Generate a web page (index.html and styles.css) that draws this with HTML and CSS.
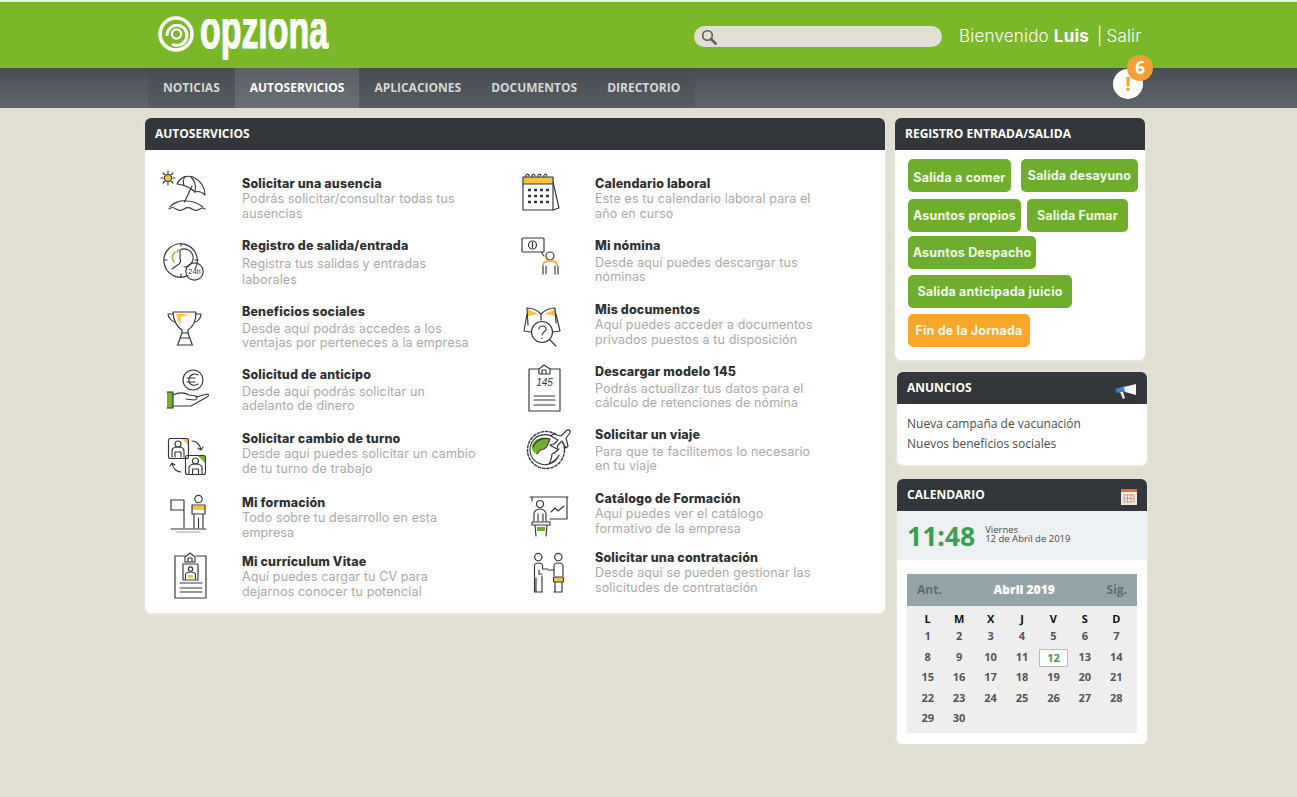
FILE: index.html
```html
<!DOCTYPE html>
<html lang="es">
<head>
    <meta charset="UTF-8">
    <title>Opziona</title>
    <link rel="stylesheet" href="styles.css">
</head>
<body>
    <header class="topbar">
        <div class="wrap topbar-inner">
            <svg class="logo" width="176" height="50" viewBox="0 0 176 50">
                <clipPath id="logo-clip"><rect x="40" y="9" width="136" height="41"/></clipPath>
                <circle class="logo-ring" cx="19" cy="24" r="16" stroke-width="3.6"/>
                <path class="logo-ring" d="M10 26a10 10 0 1 1 5 8" stroke-width="3"/>
                <circle class="logo-ring" cx="19.500" cy="24" r="4.600" stroke-width="2.400"/>
                <text class="logo-text" x="43" y="38" textLength="128" lengthAdjust="spacingAndGlyphs" clip-path="url(#logo-clip)">opziona</text>
            </svg>
            <div class="search">
                <svg width="16" height="16" viewBox="0 0 16 16">
                    <circle cx="6.5" cy="6.5" r="4.8" fill="none" stroke="#5c5c5c" stroke-width="1.6"/>
                    <path d="M10 10l4.6 4.6" stroke="#5c5c5c" stroke-width="2.6" stroke-linecap="round"/>
                </svg>
            </div>
            <div class="user">Bienvenido <b>Luis</b> <span class="sep">|</span>Salir</div>
        </div>
    </header>

    <nav class="navbar">
        <div class="wrap navbar-inner">
            <ul class="tabs">
                <li>NOTICIAS</li>
                <li class="active">AUTOSERVICIOS</li>
                <li>APLICACIONES</li>
                <li>DOCUMENTOS</li>
                <li>DIRECTORIO</li>
            </ul>
            <div class="alert">
                <span class="alert-mark">!</span>
                <span class="alert-count">6</span>
            </div>
        </div>
    </nav>

    <div class="wrap content">
        <main class="panel main-panel">
            <h2 class="panel-head">AUTOSERVICIOS</h2>
            <div class="services">
                <div class="service-col left">
                    <div class="service">
                        <svg class="ico" viewBox="0 0 56 56">
                            <circle class="fy" cx="13" cy="12" r="3.6"/>
                            <circle cx="13" cy="12" r="3.6"/>
                            <path d="M13 5v2M13 17v2M6 12h2M18 12h2M8 7l1.500 1.500M16.500 15.500L18 17M8 17l1.500-1.500M16.500 8.500L18 7"/>
                            <path d="M22 18c3-7 10-9 16-7 6 3 12 9 12 18-3-3-7-4-10-3-4-4-10-7-18-8z"/>
                            <path d="M30 10.500c-2 3-2 6-1 9M40 26c1-5 0-11-4-15"/>
                            <path d="M37 20l-7.500 16"/>
                            <path d="M15 41c3-4 10-7 17-6 6 0 12 3 16 6"/>
                            <path d="M14 43c3-2 4-2 7 0s5 2 8 0 5-2 8 0 5 2 8 0 3-1 5 0"/>
                        </svg>
                        <div class="service-text">
                            <h3>Solicitar una ausencia</h3>
                            <p>Podrás solicitar/consultar todas tus<br>ausencias</p>
                        </div>
                    </div>
                    <div class="service loose wide">
                        <svg class="ico" viewBox="0 0 56 56">
                            <path d="M40 41a16.700 16.700 0 1 0-7 6.500"/>
                            <path d="M26 15v3M26 46v3M9 32h3M40 32h3"/>
                            <path class="stroke-g" d="M20 24c-3 3-3 7-1 10M23 22l-1 2"/>
                            <path d="M25 22v9a4 4 0 0 1-1 5l-7 5M25 22a9 9 0 1 1 4 17"/>
                            <circle cx="39.500" cy="43.500" r="8.700"/>
                            <text class="ico-text" x="39.500" y="46" text-anchor="middle">24h</text>
                        </svg>
                        <div class="service-text">
                            <h3>Registro de salida/entrada</h3>
                            <p>Registra tus salidas y entradas<br>laborales</p>
                        </div>
                    </div>
                    <div class="service loose">
                        <svg class="ico" viewBox="0 0 56 56">
                            <path class="fy" d="M21 20h13l-8 3-1 9z"/>
                            <path d="M18 18h23c0 8-3 15-8 18v3h-6v-3c-5-3-9-10-9-18z"/>
                            <path d="M18 20h-5c0 3 3 7 7 8M41 20h5c0 3-2 7-6 8"/>
                            <path d="M27 39l-4 11M33 39l4 11M22 51h16M25 44h10"/>
                        </svg>
                        <div class="service-text">
                            <h3>Beneficios sociales</h3>
                            <p>Desde aquí podrás accedes a los<br>ventajas por perteneces a la empresa</p>
                        </div>
                    </div>
                    <div class="service loose">
                        <svg class="ico" viewBox="0 0 56 56">
                            <circle cx="38" cy="23" r="10"/>
                            <path d="M43 18c-3-2-8-1-9 4-1 5 4 8 9 5M32 21h8M32 25h8"/>
                            <rect class="fg" x="12" y="35" width="6" height="16"/>
                            <path d="M12 35h6v16h-6M18 38c6-3 11-3 16 0l7 1c2 1 1 4-2 4l-8-1M41 40l11-3c2 0 2 2 0 3L36 49H18"/>
                        </svg>
                        <div class="service-text">
                            <h3>Solicitud de anticipo</h3>
                            <p>Desde aquí podrás solicitar un<br>adelanto de dinero</p>
                        </div>
                    </div>
                    <div class="service">
                        <svg class="ico" viewBox="0 0 56 56">
                            <path class="fy" d="M26 17h7v7z"/>
                            <path class="fg" d="M43 35h7v7z"/>
                            <rect x="13.500" y="17.500" width="20" height="20" rx="2"/>
                            <rect x="30.500" y="34.500" width="20" height="19" rx="2"/>
                            <circle cx="23" cy="23" r="3"/>
                            <path d="M17 36v-6c0-3 2-4 6-4s6 1 6 4v6M20 36v-5h6v5"/>
                            <circle cx="40.500" cy="40" r="3"/>
                            <path d="M34 53v-6c0-3 3-4 6.500-4s6.500 1 6.500 4v6M37.500 53v-5h6v5"/>
                            <path d="M37 20c4 0 8 3 9 9M46 29l2-3M46 29l-3-2"/>
                            <path d="M26 51c-4 0-8-3-9-9M17 42l-2 3M17 42l3 2"/>
                        </svg>
                        <div class="service-text">
                            <h3>Solicitar cambio de turno</h3>
                            <p>Desde aquí puedes solicitar un cambio<br>de tu turno de trabajo</p>
                        </div>
                    </div>
                    <div class="service">
                        <svg class="ico" viewBox="0 0 56 56">
                            <path d="M29 43V15H16v10h13"/>
                            <circle cx="43.500" cy="14" r="3.700"/>
                            <path class="fy" d="M37 21h13v4H37z"/>
                            <path d="M37 20c0 1 0 0 0 0h13M37 20v9h2v14M50 20v9h-2v14M39 29h9M43.500 33v10"/>
                            <path d="M16 44h35"/>
                            <path class="soft" d="M21 47h24"/>
                        </svg>
                        <div class="service-text">
                            <h3>Mi formación</h3>
                            <p>Todo sobre tu desarrollo en esta<br>empresa</p>
                        </div>
                    </div>
                    <div class="service">
                        <svg class="ico" viewBox="0 0 56 56">
                            <path d="M30 12H20v42h31V12H41"/>
                            <path d="M30 18v-5l5-4 5 4v5zM33 18v-4h4v4"/>
                            <rect x="28" y="20" width="15" height="16"/>
                            <circle cx="35.500" cy="25" r="2.200"/>
                            <path d="M30.500 35v-4c0-2 2-3 5-3s5 1 5 3v4"/>
                            <rect class="fy" x="33" y="31" width="5" height="3"/>
                            <path d="M25 39h22M25 44h22M25 48h22"/>
                        </svg>
                        <div class="service-text">
                            <h3>Mi currículum Vitae</h3>
                            <p>Aquí puedes cargar tu CV para<br>dejarnos conocer tu potencial</p>
                        </div>
                    </div>
                </div>

                <div class="service-col right">
                    <div class="service">
                        <svg class="ico" viewBox="0 0 56 56">
                            <path d="M38 16l6 26-6 2"/>
                            <rect class="fy" x="8" y="11" width="30" height="7"/>
                            <rect x="8" y="11" width="30" height="33"/>
                            <path d="M8 18h30M11 11c-1-3 3-4 3-1M17 11c-1-3 3-4 3-1M23 11c-1-3 3-4 3-1M29 11c-1-3 3-4 3-1"/>
                            <path class="dots" d="M13 24h3M19 24h3M25 24h3M31 24h3M13 30h3M19 30h3M25 30h3M31 30h3M13 36h3M19 36h3M25 36h3M31 36h3"/>
                        </svg>
                        <div class="service-text">
                            <h3>Calendario laboral</h3>
                            <p>Este es tu calendario laboral para el<br>año en curso</p>
                        </div>
                    </div>
                    <div class="service loose">
                        <svg class="ico" viewBox="0 0 56 56">
                            <path d="M8 10h20c1 0 1 1 1 1v12c0 1-1 1-1 1H8c-1 0-1-1-1-1V11c0-1 1-1 1-1zM26 24l3 4"/>
                            <circle cx="17.500" cy="17" r="4"/>
                            <path d="M17.500 14.500v5"/>
                            <circle cx="35" cy="28" r="4"/>
                            <path class="stroke-y" d="M28 37c0-3 3-4 7-4s7 1 7 4" />
                            <path d="M28 38v8M43 38v8M31 38v8M40 38v8"/>
                        </svg>
                        <div class="service-text">
                            <h3>Mi nómina</h3>
                            <p>Desde aquí puedes descargar tus<br>nóminas</p>
                        </div>
                    </div>
                    <div class="service">
                        <svg class="ico" viewBox="0 0 56 56">
                            <path class="fy" d="M13 17l10 5-10 2zM40 17l-10 5 10 2z"/>
                            <path d="M13 33l-1-17c5 0 10 2 14 6 4-4 9-6 14-6l1 15"/>
                            <path d="M26 22v6M12 22l-3 17 7 1M41 22l4 17-7 1"/>
                            <circle cx="27" cy="40" r="10.500"/>
                            <path d="M24 37c0-4 7-4 7 0 0 3-4 3-4 6M27 46v.5"/>
                            <path d="M35 48l6 6"/>
                        </svg>
                        <div class="service-text">
                            <h3>Mis documentos</h3>
                            <p>Aquí puedes acceder a documentos<br>privados puestos a tu disposición</p>
                        </div>
                    </div>
                    <div class="service loose">
                        <svg class="ico" viewBox="0 0 56 56">
                            <path d="M24 15H14v42h31V15H35"/>
                            <path d="M24 20v-5l5-4 6 4v5zM27 20v-4h4v4"/>
                            <text class="ico-num" x="29.500" y="32" text-anchor="middle">145</text>
                            <path d="M19 42h21M19 46h21M19 51h21"/>
                        </svg>
                        <div class="service-text">
                            <h3>Descargar modelo 145</h3>
                            <p>Podrás actualizar tus datos para el<br>cálculo de retenciones de nómina</p>
                        </div>
                    </div>
                    <div class="service loose">
                        <svg class="ico" viewBox="0 0 56 56">
                            <circle class="dashed" cx="31" cy="33" r="18.500"/>
                            <path class="fg" d="M17 28c3-7 11-9 18-6-2 5-3 8-6 10-3 0-5 1-7 5-4-2-6-5-5-9z"/>
                            <path d="M38 20a15 15 0 1 0 6 18M18 30c3-7 10-10 17-8-2 5-3 9-6 10-3 0-5 2-7 5M44 38c-2 5-6 7-10 9 2-4 3-7 3-10 3-1 5-3 7-5"/>
                            <path class="plane" d="M35 28l4-1 4-4-7-4 2-2 8 2 5-5c2-2 5-1 4 2l-4 5 2 8-2 2-4-7-4 4-1 4z"/>
                        </svg>
                        <div class="service-text">
                            <h3>Solicitar un viaje</h3>
                            <p>Para que te facilitemos lo necesario<br>en tu viaje</p>
                        </div>
                    </div>
                    <div class="service">
                        <svg class="ico" viewBox="0 0 56 56">
                            <path d="M15 16h38M17 16v4M52 16v22H35"/>
                            <path d="M36 31l4-4 3 3 6-5"/>
                            <circle cx="25" cy="23" r="3.500"/>
                            <path d="M19 40v-7c0-3 3-5 6-5s6 2 6 5v7M23 40v-7M28 40v-7"/>
                            <path d="M17 41h18v3H17zM20 44l1 11M32 44l-1 11"/>
                            <rect class="fg" x="22" y="46" width="8" height="4"/>
                        </svg>
                        <div class="service-text">
                            <h3>Catálogo de Formación</h3>
                            <p>Aquí puedes ver el catálogo<br>formativo de la empresa</p>
                        </div>
                    </div>
                    <div class="service">
                        <svg class="ico" viewBox="0 0 56 56">
                            <circle cx="23.300" cy="17" r="3.700"/>
                            <circle cx="43.300" cy="17" r="3.700"/>
                            <path d="M19.500 52V26c0-2 1-3 4-3s4 1 4 3v3h5M27 34h-3v-4M21 38v14h6V36M19.500 52h8"/>
                            <path d="M39 30h-6M39 36V26c0-2 2-3 4.500-3s4.500 1 4.500 3v10M40 42v10h7V42M39 52h8"/>
                            <rect class="fy" x="38.500" y="37" width="10" height="5"/>
                            <rect x="38.500" y="37" width="10" height="5" rx="1"/>
                        </svg>
                        <div class="service-text">
                            <h3>Solicitar una contratación</h3>
                            <p>Desde aquí se pueden gestionar las<br>solicitudes de contratación</p>
                        </div>
                    </div>
                </div>
            </div>
        </main>

        <aside class="sidebar">
            <section class="panel clock-panel">
                <h2 class="panel-head">REGISTRO ENTRADA/SALIDA</h2>
                <div class="actions">
                    <button class="action w-comer">Salida a comer</button>
                    <button class="action w-desayuno">Salida desayuno</button>
                    <button class="action w-propios">Asuntos propios</button>
                    <button class="action w-fumar">Salida Fumar</button>
                    <button class="action w-despacho">Asuntos Despacho</button>
                    <button class="action w-juicio">Salida anticipada juicio</button>
                    <button class="action orange w-fin">Fin de la Jornada</button>
                </div>
            </section>

            <section class="panel side-panel">
                <h2 class="panel-head">ANUNCIOS
                    <svg class="head-icon megaphone" width="23" height="16" viewBox="0 0 23 16">
                        <path d="M1 6l10-3 1 6-9 1z" fill="#3f7fc0"/>
                        <path d="M10 4l12-3v11l-11-3z" fill="#f4f4f4"/>
                        <path d="M6 9l3 7 2-1-2-6z" fill="#e8e8e8"/>
                    </svg>
                </h2>
                <ul class="news">
                    <li>Nueva campaña de vacunación</li>
                    <li>Nuevos beneficios sociales</li>
                </ul>
            </section>

            <section class="panel side-panel cal-panel">
                <h2 class="panel-head">CALENDARIO
                    <svg class="head-icon cal-icon" width="16" height="16" viewBox="0 0 16 16">
                        <rect y="1" width="16" height="15" fill="#ecE8dd"/>
                        <rect y="0" width="16" height="3" fill="#dc6f35"/>
                        <path d="M3 6h10v7H3zM6.500 6v7M10 6v7M3 9.500h10" fill="none" stroke="#c98a6c" stroke-width=".8"/>
                    </svg>
                </h2>
                <div class="clock">
                    <span class="time">11:48</span>
                    <span class="date">Viernes<br>12 de Abril de 2019</span>
                </div>
                <div class="calendar">
                    <div class="cal-head">
                        <span>Ant.</span>
                        <strong>Abril 2019</strong>
                        <span>Sig.</span>
                    </div>
                    <div class="cal-grid">
                        <b>L</b><b>M</b><b>X</b><b>J</b><b>V</b><b>S</b><b>D</b>
                        <span>1</span><span>2</span><span>3</span><span>4</span><span>5</span><span>6</span><span>7</span>
                        <span>8</span><span>9</span><span>10</span><span>11</span><span class="today">12</span><span>13</span><span>14</span>
                        <span>15</span><span>16</span><span>17</span><span>18</span><span>19</span><span>20</span><span>21</span>
                        <span>22</span><span>23</span><span>24</span><span>25</span><span>26</span><span>27</span><span>28</span>
                        <span>29</span><span>30</span>
                    </div>
                </div>
            </section>
        </aside>
    </div>
</body>
</html>
```

FILE: styles.css
```css
* {
    margin: 0;
    padding: 0;
    box-sizing: border-box;
}

body {
    background: #e0dfd2;
    font-family: 'Open Sans', sans-serif;
    color: #33373b;
    overflow: hidden;
}

ul {
    list-style: none;
}

.wrap {
    width: 1007px;
    margin: 0 auto;
}

/* Top bar */
.topbar {
    height: 66px;
    margin-top: 2px;
    background: #7ab829;
    box-shadow: 0 -2px 0 #f2f2ea;
}

.topbar-inner {
    display: flex;
    align-items: center;
    height: 66px;
}

.logo {
    flex: none;
    margin-left: 12px;
    overflow: visible;
}

.logo-ring {
    fill: none;
    stroke: #fff;
}

.logo-text {
    font-family: 'Liberation Sans', sans-serif;
    font-weight: 700;
    font-size: 55px;
    fill: #fff;
    stroke: #fff;
    stroke-width: 1.2;
}

.search {
    width: 248px;
    height: 21px;
    margin: 3px 0 0 361px;
    padding: 2px 0 0 7px;
    border-radius: 11px;
    background: #e0dfd2;
}

.user {
    margin: 1px 0 0 17px;
    font-family: 'Inter', sans-serif;
    font-weight: 300;
    font-size: 17px;
    letter-spacing: .2px;
    color: #fff;
    white-space: nowrap;
}

.user b {
    font-weight: 700;
}

.user .sep {
    margin-left: 3px;
    margin-right: 4px;
}

/* Nav */
.navbar {
    height: 40px;
    background: linear-gradient(#494f55, #5f656b);
}

.navbar-inner {
    display: flex;
    height: 40px;
    padding-left: 3px;
    position: relative;
}

.tabs {
    display: flex;
    background: linear-gradient(#474d52, #565c62);
}

.tabs li {
    padding: 0 15px;
    line-height: 39px;
    font-size: 12px;
    font-weight: 700;
    color: #d4d6d6;
}

.tabs .active {
    color: #fff;
    background: linear-gradient(#5a6066, #6a7076);
}

.alert {
    position: absolute;
    left: 968px;
    top: 1px;
    width: 30px;
    height: 30px;
    border-radius: 50%;
    background: #fff;
    text-align: center;
}

.alert-mark {
    font-weight: 700;
    font-size: 20px;
    line-height: 30px;
    color: #f29f36;
}

.alert-count {
    position: absolute;
    left: 14px;
    top: -14px;
    width: 26px;
    height: 26px;
    border-radius: 50%;
    background: #f29f36;
    color: #fff;
    font-weight: 700;
    font-size: 17px;
    line-height: 26px;
}

/* Panels */
.content {
    display: flex;
    gap: 10px;
    align-items: flex-start;
    padding-top: 10px;
}

.panel {
    background: #fff;
    border-radius: 6px;
    box-shadow: 0 1px 3px rgba(255, 255, 255, .6);
}

.panel-head {
    display: flex;
    justify-content: space-between;
    align-items: center;
    height: 32px;
    padding: 0 10px 2px;
    background: #33373b;
    border-radius: 6px 6px 0 0;
    font-size: 12px;
    font-weight: 700;
    color: #fff;
}

.head-icon {
    flex: none;
}

.megaphone {
    margin-top: 7px;
}

.cal-icon {
    margin-top: 5px;
}

.main-panel {
    width: 740px;
    height: 495px;
}

.services {
    display: flex;
    padding-top: 26px;
    padding-left: 10px;
}

.service-col {
    flex: none;
}

.service-col.left {
    width: 360px;
}

.service {
    display: flex;
    height: 46px;
}

.ico {
    flex: none;
    width: 56px;
    height: 56px;
    margin: -10px 0 -10px 0;
    overflow: visible;
    fill: none;
    stroke: #33373b;
    stroke-width: 1.15;
    stroke-linecap: round;
    stroke-linejoin: round;
}

.ico .fy {
    fill: #f6c445;
    stroke: none;
}

.ico .fg {
    fill: #73b02e;
    stroke: none;
}

.ico .stroke-g {
    stroke: #8dbf45;
    stroke-width: 1.6;
}

.ico .stroke-y {
    stroke: #e9b93a;
    stroke-width: 1.8;
}

.ico .soft {
    stroke: #9a9a9a;
}

.ico .dots {
    stroke-width: 2.6;
    stroke-linecap: butt;
}

.ico .dashed {
    stroke-dasharray: 2.5 1.8;
    stroke-width: 1.4;
}

.ico .plane {
    fill: #fff;
}

.ico-text {
    font-family: 'Liberation Sans Narrow', 'Liberation Sans', sans-serif;
    font-size: 7.5px;
    fill: #33373b;
    stroke: none;
}

.ico-num {
    font-family: 'Liberation Sans', sans-serif;
    font-style: italic;
    font-size: 10px;
    fill: #33373b;
    stroke: none;
}

.service-text {
    margin-left: 31px;
    font-family: 'Inter', sans-serif;
}

.service-text h3 {
    font-size: 12.5px;
    font-weight: 800;
    letter-spacing: .15px;
    line-height: 16px;
    color: #2f3033;
}

.service-text p {
    font-size: 12.5px;
    letter-spacing: .13px;
    line-height: 14.5px;
    color: #a9a9a9;
    white-space: nowrap;
}

.service.loose p {
    margin-top: 1.5px;
}

.service.wide p {
    line-height: 16px;
}

.service-col .service:nth-child(n+2) {
    margin-top: 18px;
}

.left .service:nth-child(2) { margin-top: 16px; }
.left .service:nth-child(3) { margin-top: 20px; }
.left .service:nth-child(4) { margin-top: 17px; }
.left .service:nth-child(7) { margin-top: 13px; }

.right .service:nth-child(2) { margin-top: 16px; }
.right .service:nth-child(4) { margin-top: 16px; }
.right .service:nth-child(5) { margin-top: 17px; }
.right .service:nth-child(7) { margin-top: 13px; }

.right .service-text {
    margin-left: 24px;
}

.right .ico {
    margin-left: 0;
}

/* Sidebar */
.sidebar {
    width: 252px;
}

.clock-panel {
    width: 250px;
    height: 242px;
}

.actions {
    display: flex;
    flex-wrap: wrap;
    column-gap: 10px;
    row-gap: 7px;
    padding: 9px 0 0 13px;
}

.action {
    height: 33px;
    border: 0;
    border-radius: 5px;
    background: #6fae2d;
    color: #f4f8ec;
    font-family: 'Inter', sans-serif;
    font-size: 12.5px;
    font-weight: 700;
    letter-spacing: .2px;
    text-align: center;
}

.action.orange {
    background: #f9a72b;
}

.w-comer { width: 103px; padding-top: 3px; }
.w-desayuno { width: 117px; padding: 0; }
.w-propios { width: 113px; padding: 0; }
.w-fumar { width: 101px; margin-left: -4px; }
.w-despacho { width: 128px; margin-top: -3px; margin-right: 50px; padding: 0; }
.w-juicio { width: 164px; margin-top: -1px; margin-right: 40px; }
.w-fin { width: 122px; margin-top: -1px; padding: 0; }

.side-panel {
    margin: 12px 0 0 2px;
    width: 250px;
}

.news {
    height: 61px;
    padding: 10px 10px 0;
    font-size: 12px;
    line-height: 20px;
    color: #4c4c4c;
}

.cal-panel {
    margin-top: 14px;
    height: 265px;
}

.clock {
    display: flex;
    align-items: center;
    gap: 10px;
    height: 49px;
    padding-left: 10px;
    background: #edf1f3;
}

.time {
    font-size: 26.5px;
    font-weight: 700;
    color: #37a24b;
}

.date {
    font-size: 9.5px;
    line-height: 9.5px;
    color: #4c4c4c;
    padding-bottom: 3px;
}

.calendar {
    margin: 14px 10px 0;
    background: #eeeeee;
}

.cal-head {
    display: flex;
    justify-content: space-between;
    align-items: center;
    height: 32px;
    padding: 0 10px 1px;
    background: #93a5a8;
    font-size: 12px;
    font-weight: 700;
    color: #5d6c6f;
}

.cal-head strong {
    color: #fff;
}

.cal-grid {
    display: grid;
    grid-template-columns: repeat(7, 1fr);
    grid-auto-rows: 20.500px;
    grid-template-rows: 15px;
    height: 127px;
    padding: 5px 5px 0;
    font-size: 11px;
    text-align: center;
}

.cal-grid b {
    line-height: 16px;
    color: #111;
}

.cal-grid span {
    line-height: 20px;
    font-weight: 700;
    color: #555;
}

.cal-grid .today {
    height: 18px;
    margin: 2px 1px 0;
    line-height: 16px;
    background: #fff;
    border: 1px solid #bbb;
    color: #37a24b;
}
```
